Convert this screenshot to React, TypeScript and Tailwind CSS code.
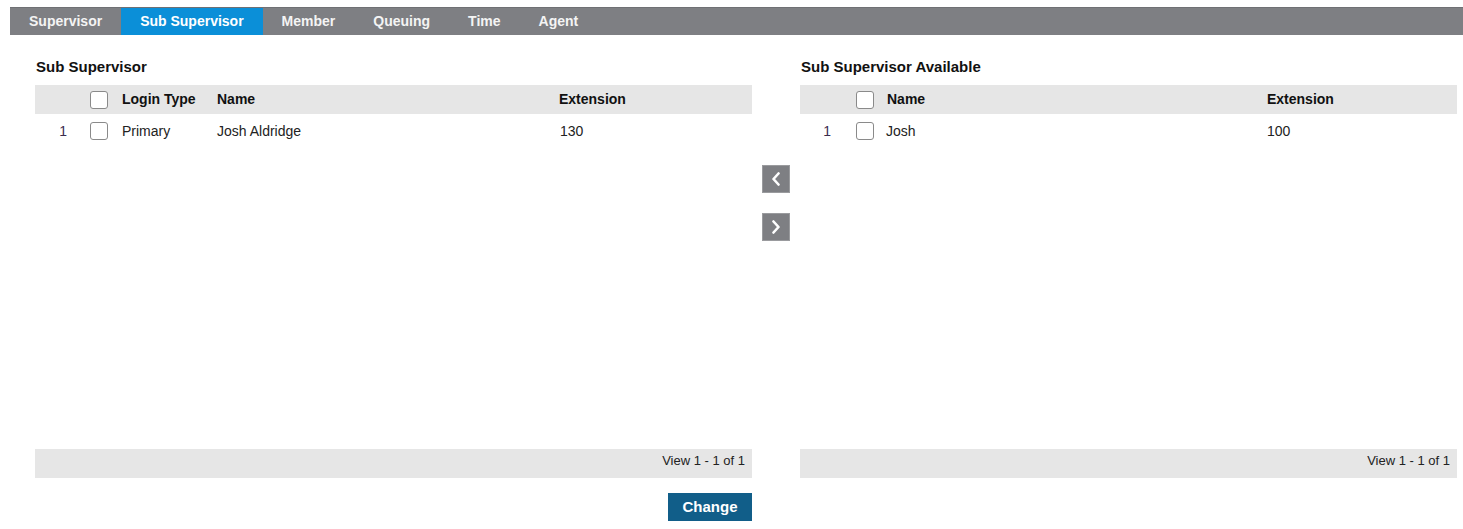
import React from 'react';

const tabs = ['Supervisor', 'Sub Supervisor', 'Member', 'Queuing', 'Time', 'Agent'];

function Checkbox() {
  return <span className="block w-[18px] h-[18px] rounded-[3px] border border-[#8a8a8a] bg-white" />;
}

function Chevron({ dir }: { dir: 'left' | 'right' }) {
  return (
    <svg width="10" height="14" viewBox="0 0 10 14" fill="none">
      <path
        d={dir === 'left' ? 'M7.5 1.5 L2.5 7 L7.5 12.5' : 'M2.5 1.5 L7.5 7 L2.5 12.5'}
        stroke="white"
        strokeWidth="2.6"
        strokeLinecap="round"
        strokeLinejoin="round"
      />
    </svg>
  );
}

function App() {
  return (
    <div className="w-[1463px] h-[529px] bg-white pl-[10px] pt-[7px] text-[#222]" style={{ fontFamily: '"Liberation Sans", Arial, sans-serif' }}>
      {/* tab bar */}
      <div className="flex h-[28px] bg-[#7e7f83] border-t border-[#6f7074]">
        {tabs.map((tab) => (
          <div
            key={tab}
            className={`flex items-center pb-[1px] px-[19px] text-[14px] font-bold text-[#f4f4f4] ${tab === 'Sub Supervisor' ? 'bg-[#0b8fd8] text-white' : ''}`}
          >
            {tab}
          </div>
        ))}
      </div>

      <div className="flex mt-[22px] ml-[25px]">
        {/* left panel */}
        <div className="w-[717px] flex flex-col">
          <div className="h-[20px] pl-[1px] text-[15px] font-bold leading-[20px] text-[#111]">Sub Supervisor</div>
          <div className="mt-[8px] h-[29px] bg-[#e6e6e6] flex items-center text-[14px] font-bold text-[#111]">
            <div className="w-[47px]" />
            <div className="w-[40px] pl-[8px]"><Checkbox /></div>
            <div className="w-[95px]">Login Type</div>
            <div className="w-[342px]">Name</div>
            <div>Extension</div>
          </div>
          <div className="h-[335px]">
            <div className="h-[34px] flex items-center text-[14px]">
              <div className="w-[47px] pr-[15px] text-right text-[#3b2d4f]">1</div>
              <div className="w-[40px] pl-[8px]"><Checkbox /></div>
              <div className="w-[95px]">Primary</div>
              <div className="w-[343px]">Josh Aldridge</div>
              <div>130</div>
            </div>
          </div>
          <div className="h-[29px] bg-[#e6e6e6] flex items-start justify-end pt-[4px] pr-[7px] text-[13px] leading-[15px] text-[#222]">
            View 1 - 1 of 1
          </div>
          <div className="flex justify-end mt-[15px]">
            <button className="w-[84px] h-[28px] bg-[#115e89] text-white text-[15px] font-bold">Change</button>
          </div>
        </div>

        {/* move buttons */}
        <div className="w-[48px] pt-[108px] pl-[10px] flex flex-col gap-[20px]">
          <button className="w-[28px] h-[28px] bg-[#7e7f83] border border-[#9a9b9e] flex items-center justify-center">
            <Chevron dir="left" />
          </button>
          <button className="w-[28px] h-[28px] bg-[#7e7f83] border border-[#9a9b9e] flex items-center justify-center">
            <Chevron dir="right" />
          </button>
        </div>

        {/* right panel */}
        <div className="w-[657px] flex flex-col">
          <div className="h-[20px] pl-[1px] text-[15px] font-bold leading-[20px] text-[#111]">Sub Supervisor Available</div>
          <div className="mt-[8px] h-[29px] bg-[#e6e6e6] flex items-center text-[14px] font-bold text-[#111]">
            <div className="w-[46px]" />
            <div className="w-[41px] pl-[10px]"><Checkbox /></div>
            <div className="w-[380px]">Name</div>
            <div>Extension</div>
          </div>
          <div className="h-[335px]">
            <div className="h-[34px] flex items-center text-[14px]">
              <div className="w-[46px] pr-[15px] text-right text-[#3b2d4f]">1</div>
              <div className="w-[41px] pl-[10px]"><Checkbox /></div>
              <div className="w-[380px] -ml-[1px]">Josh</div>
              <div className="ml-[1px]">100</div>
            </div>
          </div>
          <div className="h-[29px] bg-[#e6e6e6] flex items-start justify-end pt-[4px] pr-[7px] text-[13px] leading-[15px] text-[#222]">
            View 1 - 1 of 1
          </div>
        </div>
      </div>
    </div>
  );
}

export default App;
